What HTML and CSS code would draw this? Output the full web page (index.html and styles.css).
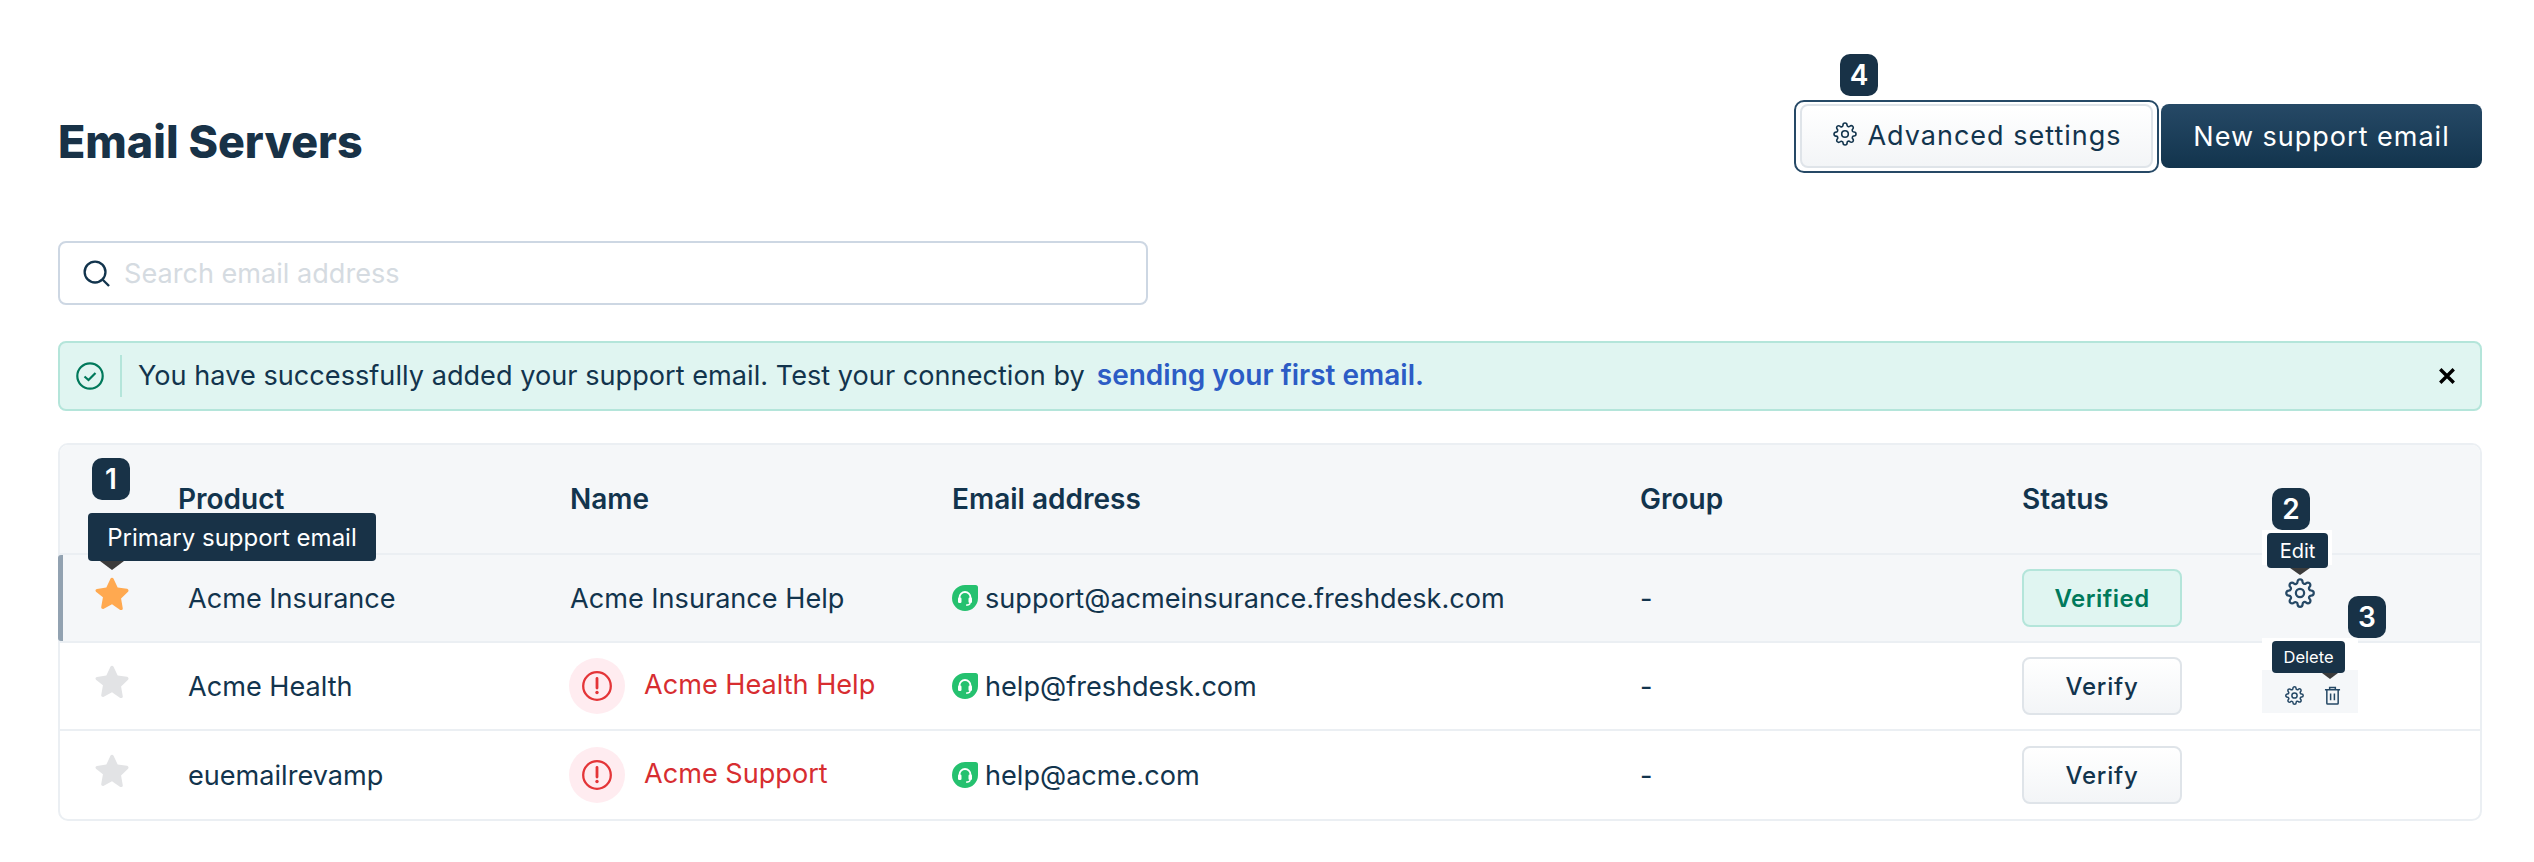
FILE: index.html
```html
<!DOCTYPE html>
<html lang="en">
<head>
<meta charset="utf-8">
<title>Email Servers</title>
<link rel="stylesheet" href="styles.css">
</head>
<body>
<main class="page">
  <header class="top">
    <h1 class="title">Email Servers</h1>
    <div class="actions">
      <div class="ring">
        <span class="badge badge-4">4</span>
        <button class="btn btn-adv">
          <svg class="ico-adv" viewBox="0 0 24 24"><use href="#gear"/></svg>
          Advanced settings
        </button>
      </div>
      <button class="btn btn-new">New support email</button>
    </div>
  </header>

  <div class="search">
    <svg class="search-ico" viewBox="0 0 28 28"><circle cx="12.5" cy="12.5" r="10.8"/><path d="M20.5 20.5 27 27"/></svg>
    <span class="placeholder">Search email address</span>
  </div>

  <div class="banner">
    <svg class="check" viewBox="0 0 28 28"><circle cx="14" cy="14" r="12.7"/><path d="M8.5 14.5 12.5 18 19.5 11"/></svg>
    <span class="banner-sep"></span>
    <span class="banner-text">You have successfully added your support email. Test your connection by</span>
    <a class="banner-link">sending your first email.</a>
    <svg class="close" viewBox="0 0 16 16"><path d="M2 2 14 14M14 2 2 14"/></svg>
  </div>

  <section class="table">
    <div class="row head">
      <span></span><span>Product</span><span>Name</span><span>Email address</span><span>Group</span><span>Status</span><span></span>
    </div>

    <div class="row body hover primary">
      <svg class="star on" viewBox="0 0 24 24"><use href="#star"/></svg>
      <span class="product">Acme Insurance</span>
      <span class="name">Acme Insurance Help</span>
      <span class="email"><svg class="leaf" viewBox="0 0 26 26"><use href="#leaf"/></svg>support@acmeinsurance.freshdesk.com</span>
      <span>-</span>
      <span><button class="status verified">Verified</button></span>
      <span class="row-actions"><svg class="gear-lg" viewBox="0 0 24 24"><use href="#gear"/></svg></span>
    </div>

    <div class="row body">
      <svg class="star" viewBox="0 0 24 24"><use href="#star"/></svg>
      <span class="product">Acme Health</span>
      <span class="name alert"><span class="alert-ico"><svg viewBox="0 0 30 30"><use href="#alert"/></svg></span><span class="alert-text">Acme Health Help</span></span>
      <span class="email"><svg class="leaf" viewBox="0 0 26 26"><use href="#leaf"/></svg>help@freshdesk.com</span>
      <span>-</span>
      <span><button class="status verify">Verify</button></span>
      <span class="hover-actions">
        <svg class="gear-sm" viewBox="0 0 24 24"><use href="#gear"/></svg>
        <svg class="trash" viewBox="0 0 18 20"><path d="M1 4h16M6 4V1.500h6V4M3 4v14.200c0 .5.4.8.8.8h10.400c.4 0 .8-.3.8-.8V4M7 8v7M11 8v7"/></svg>
      </span>
    </div>

    <div class="row body last">
      <svg class="star" viewBox="0 0 24 24"><use href="#star"/></svg>
      <span class="product">euemailrevamp</span>
      <span class="name alert"><span class="alert-ico"><svg viewBox="0 0 30 30"><use href="#alert"/></svg></span><span class="alert-text">Acme Support</span></span>
      <span class="email"><svg class="leaf" viewBox="0 0 26 26"><use href="#leaf"/></svg>help@acme.com</span>
      <span>-</span>
      <span><button class="status verify">Verify</button></span>
      <span></span>
    </div>

    <span class="badge badge-1">1</span>
    <span class="tip tip-primary">Primary support email</span>

    <span class="badge badge-2">2</span>
    <span class="tip-wrap wrap-edit"><span class="tip tip-edit">Edit</span></span>

    <span class="badge badge-3">3</span>
    <span class="tip-wrap wrap-delete"><span class="tip tip-delete">Delete</span></span>
  </section>
</main>

<svg class="defs" aria-hidden="true">
  <defs>
    <g id="gear">
      <circle cx="12" cy="12" r="3.300"/>
      <path d="M19.4 15a1.65 1.65 0 0 0 .33 1.82l.06.06a2 2 0 0 1 0 2.83 2 2 0 0 1-2.83 0l-.06-.06a1.65 1.65 0 0 0-1.82-.33 1.65 1.65 0 0 0-1 1.51V21a2 2 0 0 1-2 2 2 2 0 0 1-2-2v-.09A1.65 1.65 0 0 0 9 19.4a1.65 1.65 0 0 0-1.82.33l-.06.06a2 2 0 0 1-2.83 0 2 2 0 0 1 0-2.83l.06-.06a1.65 1.65 0 0 0 .33-1.82 1.65 1.65 0 0 0-1.51-1H3a2 2 0 0 1-2-2 2 2 0 0 1 2-2h.09A1.65 1.65 0 0 0 4.6 9a1.65 1.65 0 0 0-.33-1.82l-.06-.06a2 2 0 0 1 0-2.83 2 2 0 0 1 2.83 0l.06.06a1.65 1.65 0 0 0 1.82.33H9a1.65 1.65 0 0 0 1-1.51V3a2 2 0 0 1 2-2 2 2 0 0 1 2 2v.09a1.65 1.65 0 0 0 1 1.51 1.65 1.65 0 0 0 1.82-.33l.06-.06a2 2 0 0 1 2.83 0 2 2 0 0 1 0 2.83l-.06.06a1.65 1.65 0 0 0-.33 1.82V9a1.65 1.65 0 0 0 1.51 1H21a2 2 0 0 1 2 2 2 2 0 0 1-2 2h-.09a1.65 1.65 0 0 0-1.51 1z"/>
    </g>
    <path id="star" d="M12 1.200c.5 0 .9.3 1.100.7l2.900 6.200 6.600.9c1 .2 1.400 1.400.7 2.100l-4.900 4.800 1.200 6.800c.2 1-.9 1.800-1.800 1.300L12 20l-5.800 3.100c-.9.5-2-.3-1.800-1.300l1.200-6.800L.7 11.100C0 10.400.4 9.200 1.400 9.100l6.600-.9 2.900-6.300c.2-.4.6-.7 1.100-.7z"/>
    <g id="alert">
      <circle cx="15" cy="15" r="13.800" fill="none" stroke="#e43538" stroke-width="2.300"/>
      <path d="M15 7.500v9.500" fill="none" stroke="#e43538" stroke-width="2.800" stroke-linecap="round"/>
      <circle cx="15" cy="21.500" r="1.700" fill="#e43538"/>
    </g>
    <g id="leaf">
      <path d="M13 0h10.500A2.500 2.500 0 0 1 26 2.500V13a13 13 0 0 1-26 0A13 13 0 0 1 13 0z" fill="#25c16f"/>
      <path d="M7.500 14v-1.500a5.500 5.500 0 0 1 11 0V14" fill="none" stroke="#fff" stroke-width="1.800"/>
      <rect x="6" y="12.500" width="3.500" height="5.500" rx="1.200" fill="#fff"/>
      <rect x="16.500" y="12.500" width="3.500" height="5.500" rx="1.200" fill="#fff"/>
      <path d="M18.300 18c-.5 1.500-2 2.200-4.300 2.200" fill="none" stroke="#fff" stroke-width="1.200"/>
    </g>
  </defs>
</svg>
</body>
</html>
```

FILE: styles.css
```css
* { box-sizing: border-box; }

html, body { margin: 0; background: #fff; }

body {
  font-family: Inter, "Liberation Sans", sans-serif;
  color: #12344d;
  font-size: 27.100px;
  overflow: hidden;
}

.page {
  width: 2534px;
  height: 862px;
  padding: 100px 52px 0 58px;
}

.defs { display: none; }

.top {
  display: flex;
  justify-content: space-between;
  align-items: center;
  height: 73px;
}

.title {
  margin: 0;
  padding-top: 10px;
  font-size: 44.800px;
  line-height: 56px;
  font-weight: 800;
  color: #183247;
}

.actions { display: flex; align-items: flex-start; gap: 2px; }

.ring {
  position: relative;
  padding: 2px 4px 3px;
  border: 2px solid #264966;
  border-radius: 10px;
  background: #fff;
}

.btn {
  display: flex;
  align-items: center;
  justify-content: center;
  height: 64px;
  font: 400 27px Inter, sans-serif;
  letter-spacing: 1px;
  border-radius: 8px;
  cursor: pointer;
}

.btn-adv {
  width: 353px;
  gap: 10px;
  padding-bottom: 2px;
  color: #12344d;
  background: linear-gradient(#fff, #f3f5f7);
  border: 2px solid #dfe4e9;
}

.ico-adv {
  width: 24px;
  height: 24px;
  margin-top: -4px;
  margin-left: 2px;
  fill: none;
  stroke: #12344d;
  stroke-width: 1.600;
}

.btn-new {
  margin-top: 4px;
  width: 321px;
  color: #fff;
  background: linear-gradient(#264966, #12344d);
  border: 0;
}

.search {
  display: flex;
  align-items: center;
  margin-top: 68px;
  width: 1090px;
  height: 64px;
  padding-left: 23px;
  border: 2px solid #cdd7e3;
  border-radius: 8px;
}

.search-ico {
  width: 27px;
  height: 27px;
  fill: none;
  stroke: #12344d;
  stroke-width: 2.400;
}

.placeholder {
  margin-left: 14px;
  color: #d5dbe1;
}

.banner {
  display: flex;
  align-items: center;
  margin-top: 36px;
  height: 70px;
  padding: 0 24px 2px 16px;
  background: #e0f5f1;
  border: 2px solid #b4e5da;
  border-radius: 8px;
}

.check {
  width: 28px;
  height: 28px;
  margin-top: 2px;
  fill: none;
  stroke: #00795b;
  stroke-width: 2.200;
}

.banner-sep {
  width: 2px;
  height: 42px;
  margin: 2px 16px 0;
  background: #b4e5da;
}

.banner-text { white-space: nowrap; letter-spacing: 0.030px; }

.banner-link {
  margin-left: 12px;
  font-size: 28px;
  color: #2c5cc5;
  font-weight: 600;
}

.close {
  width: 18px;
  height: 18px;
  margin-left: auto;
  margin-top: 2px;
  fill: none;
  stroke: #000;
  stroke-width: 3;
}

.table {
  position: relative;
  margin-top: 32px;
  border: 2px solid #ebeff3;
  border-radius: 10px;
}

.row {
  display: grid;
  grid-template-columns: 118px 392px 382px 688px 382px 240px 218px;
  align-items: center;
}

.head {
  height: 110px;
  font-size: 28px;
  font-weight: 600;
  background: #f5f7f9;
  border-bottom: 2px solid #ebeff3;
  border-radius: 8px 8px 0 0;
  color: #12344d;
}

.body {
  position: relative;
  height: 88px;
  border-bottom: 2px solid #ebeff3;
}

.last { border-bottom: 0; }

.hover { background: #f5f7f9; }

.primary::before {
  content: "";
  position: absolute;
  left: -2px;
  top: 0;
  bottom: 0;
  width: 5px;
  background: #92a2b1;
  border-radius: 3px 0 0 3px;
}

.star {
  width: 34px;
  height: 34px;
  margin: 0 0 10px 35px;
  fill: #e2e3e5;
}

.star.on { fill: #ffa950; }

.product { padding-left: 10px; }

.name { display: flex; align-items: center; }

.alert-ico {
  display: flex;
  align-items: center;
  justify-content: center;
  width: 56px;
  height: 56px;
  margin-left: -1px;
  background: #ffecf0;
  border-radius: 50%;
}

.alert-ico svg { width: 30px; height: 30px; }

.alert-text {
  margin: 0 0 4px 19px;
  color: #d72d30;
}

.email { display: flex; align-items: center; gap: 7px; white-space: nowrap; }

.leaf { width: 26px; height: 26px; margin-top: 0; }

.status {
  display: block;
  width: 160px;
  height: 58px;
  font: 400 24px Inter, sans-serif;
  letter-spacing: 0.800px;
  border-radius: 8px;
}

.verified {
  color: #00795b;
  font-weight: 600;
  letter-spacing: 0.500px;
  background: #e0f5f1;
  border: 2px solid #b4e5da;
}

.verify {
  color: #12344d;
  font-weight: 500;
  background: linear-gradient(#fff, #f3f5f7);
  border: 2px solid #dfe4e9;
}

.row-actions { display: flex; padding-left: 23px; }

.gear-lg {
  width: 30px;
  height: 30px;
  margin-top: -10px;
  fill: none;
  stroke: #264966;
  stroke-width: 1.800;
}

.hover-actions {
  display: flex;
  align-items: center;
  gap: 20px;
  width: 96px;
  height: 44px;
  margin-top: 10px;
  padding: 8px 0 0 23px;
  background: #f5f7f9;
}

.gear-sm {
  width: 19px;
  height: 19px;
  fill: none;
  stroke: #264966;
  stroke-width: 1.900;
}

.trash {
  width: 17px;
  height: 19px;
  fill: none;
  stroke: #264966;
  stroke-width: 1.600;
}

.badge {
  position: absolute;
  display: flex;
  align-items: center;
  justify-content: center;
  width: 38px;
  height: 42px;
  font-size: 28px;
  font-weight: 600;
  line-height: 1;
  color: #fff;
  background: #183247;
  border-radius: 10px;
  z-index: 3;
}

.badge-4 { left: 44px; top: -48px; }
.badge-1 { left: 32px; top: 13px; }
.badge-2 { left: 2212px; top: 43px; }
.badge-3 { left: 2288px; top: 151px; }

.tip {
  position: absolute;
  display: flex;
  align-items: center;
  justify-content: center;
  height: 48px;
  font-size: 24px;
  color: #fff;
  background: #183247;
  border-radius: 4px;
  white-space: nowrap;
  z-index: 2;
}

.tip::after {
  content: "";
  position: absolute;
  top: 100%;
  left: 50%;
  border-style: solid;
  border-color: #3b3b3b transparent transparent;
  border-width: 9px 12px 0;
  margin-left: -12px;
}

.tip-primary { left: 28px; top: 68px; width: 288px; }
.tip-primary::after { left: 24px; }

.tip-wrap {
  position: absolute;
  background: #fff;
  z-index: 2;
}

.wrap-edit { left: 2202px; top: 85px; width: 70px; height: 35px; }
.wrap-delete { left: 2202px; top: 193px; width: 96px; height: 32px; }

.tip-edit {
  left: 5px;
  top: 3px;
  width: 61px;
  height: 35px;
  font-size: 20px;
}
.tip-edit::after { left: 33px; border-width: 7px 10px 0; margin-left: -10px; }

.tip-delete {
  left: 10px;
  top: 3px;
  width: 73px;
  height: 32px;
  font-size: 16.500px;
}
.tip-delete::after { left: 58px; border-width: 6px 8px 0; margin-left: -8px; }
```
